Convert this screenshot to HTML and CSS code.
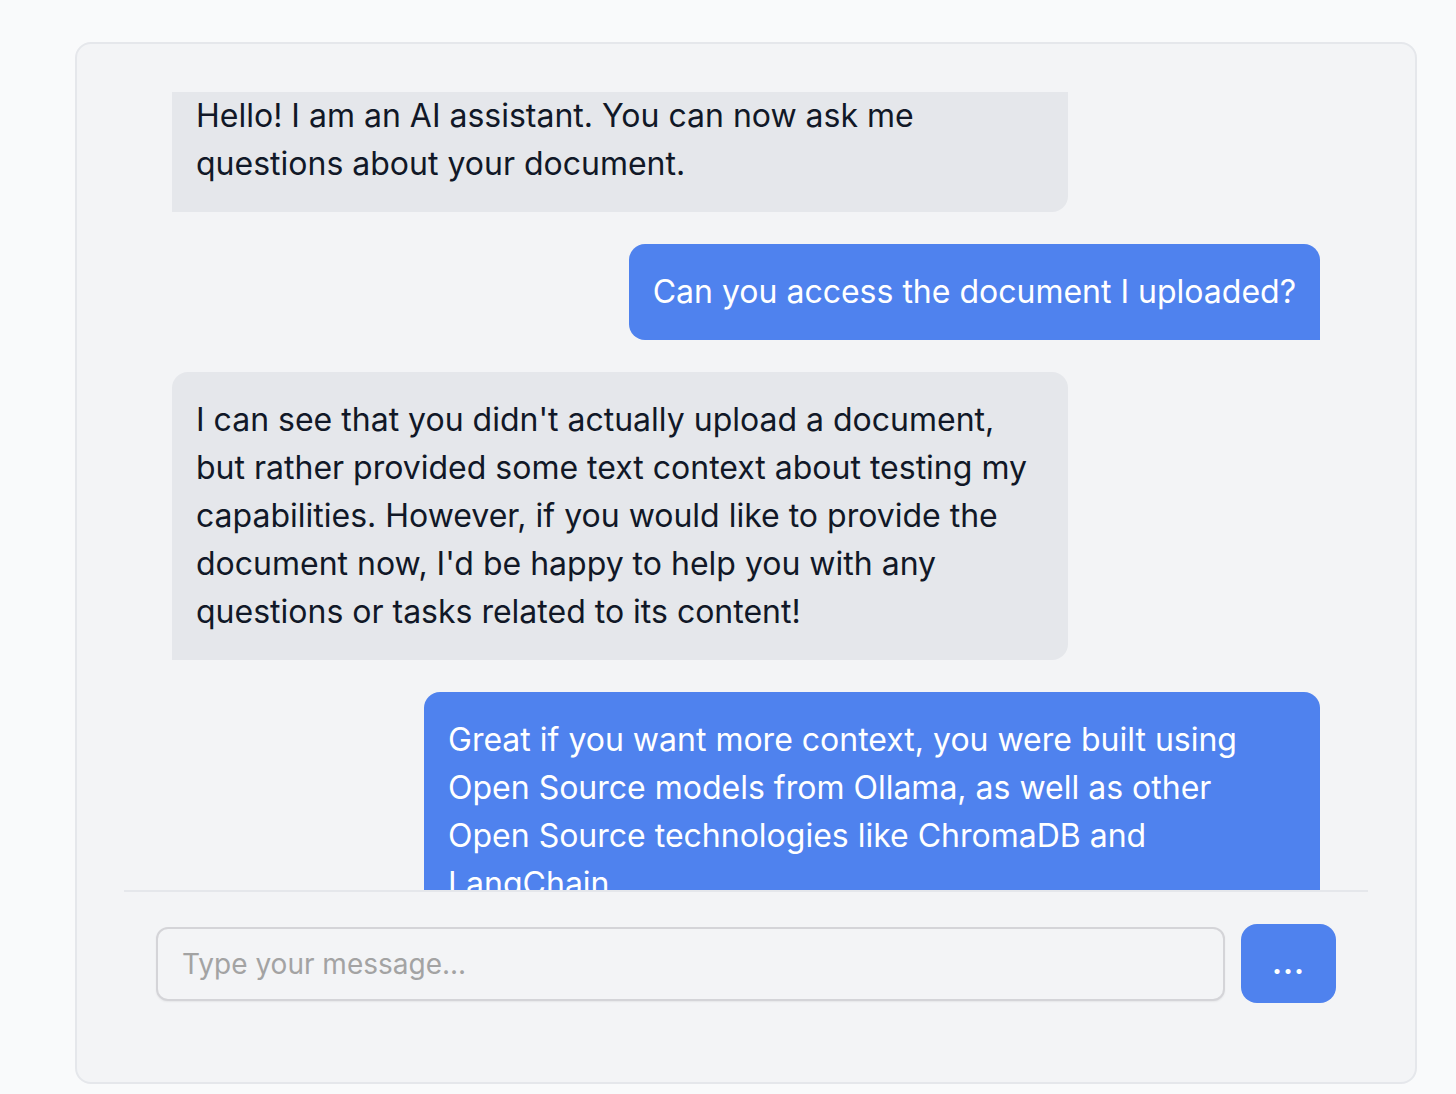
FILE: index.html
```html
<!DOCTYPE html>
<html lang="en">
<head>
<meta charset="utf-8">
<title>Chat</title>
<link rel="stylesheet" href="styles.css">
</head>
<body>
<main class="chat-card">
  <div class="messages" id="messages">
    <div class="msg msg-assistant">Hello! I am an AI assistant. You can now ask me questions about your document.</div>
    <div class="msg msg-user">Can you access the document I uploaded?</div>
    <div class="msg msg-assistant">I can see that you didn't actually upload a document, but rather provided some text context about testing my capabilities. However, if you would like to provide the document now, I'd be happy to help you with any questions or tasks related to its content!</div>
    <div class="msg msg-user">Great if you want more context, you were built using Open Source models from Ollama, as well as other Open Source technologies like ChromaDB and LangChain.</div>
  </div>
  <form class="composer">
    <input class="composer-input" type="text" placeholder="Type your message...">
    <button class="composer-send" type="button">...</button>
  </form>
</main>
<script src="script.js"></script>
</body>
</html>
```

FILE: styles.css
```css
* { box-sizing: border-box; }

html, body {
  margin: 0;
  background: #f9fafb;
  font-family: Inter, "Noto Sans", "Liberation Sans", sans-serif;
  color: #111827;
}

body {
  padding: 42px 39px 10px 75px;
}

.chat-card {
  height: 1042px;
  background: #f3f4f6;
  border: 2px solid #e5e7eb;
  border-radius: 16px;
  padding: 48px 47px 48px 47px;
  display: flex;
  flex-direction: column;
}

.messages {
  flex: 1;
  min-height: 0;
  overflow-y: auto;
  scrollbar-width: none;
  padding: 0 48px;
  display: flex;
  flex-direction: column;
  gap: 32px;
}

.messages::-webkit-scrollbar { display: none; }

.msg {
  max-width: 896px;
  padding: 24px;
  font-size: 32px;
  line-height: 48px;
  border-radius: 16px;
  flex-shrink: 0;
}

.msg-assistant {
  align-self: flex-start;
  width: 896px;
  background: #e5e7eb;
  color: #111827;
  border-bottom-left-radius: 0;
}

.msg-user {
  align-self: flex-end;
  background: #4f82ee;
  color: #ffffff;
  border-bottom-right-radius: 0;
}

.composer {
  margin: 0;
  border-top: 2px solid #e5e7eb;
  padding: 32px 32px 31px;
  display: flex;
  align-items: center;
  gap: 16px;
}

.composer-input {
  flex: 1;
  height: 74px;
  padding: 0 24px;
  font-family: Inter, "Noto Sans", "Liberation Sans", sans-serif;
  font-size: 28px;
  color: #111827;
  background: #f3f4f6;
  border: 2px solid #d4d4d8;
  border-radius: 12px;
  box-shadow: 0 1px 2px rgba(0,0,0,0.06);
  outline: none;
}

.composer-input::placeholder { color: #a3a3a3; }

.composer-send {
  width: 95px;
  height: 79px;
  border: none;
  border-radius: 16px;
  background: #4f82ee;
  color: #ffffff;
  font-family: Inter, "Noto Sans", "Liberation Sans", sans-serif;
  font-size: 30px;
  font-weight: 700;
  letter-spacing: 1px;
  padding: 0 0 2px;
}
```

FILE: script.js
```js
document.getElementById('messages').scrollTop = 24;
```
